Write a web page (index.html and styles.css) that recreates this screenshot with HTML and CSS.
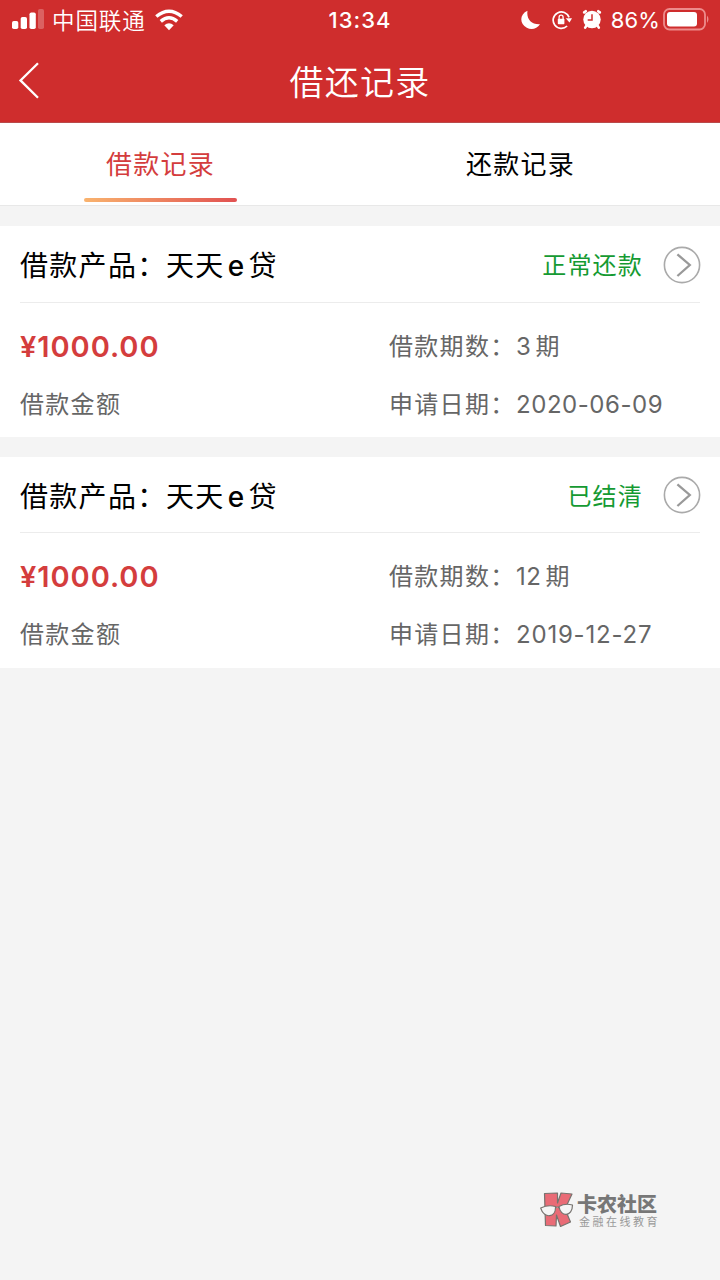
FILE: index.html
```html
<!DOCTYPE html>
<html lang="zh-CN">
<head>
<meta charset="utf-8">
<title>借还记录</title>
<link rel="stylesheet" href="styles.css">
</head>
<body>
<header class="header">
  <div class="status">
    <div class="status-left">
      <svg class="signal" width="32" height="20" viewBox="0 0 32 20" fill="#fff"><rect x="0" y="12" width="6.3" height="8" rx="1.8"/><rect x="8.7" y="8" width="6.3" height="12" rx="1.8"/><rect x="17.5" y="3.5" width="6.3" height="16.5" rx="1.8"/><rect x="26" y="0" width="6" height="20" rx="1.8" opacity=".25"/></svg>
      <span class="carrier">中国联通</span>
      <svg class="wifi" width="28" height="22" viewBox="0 0 28 22"><path d="M1.3 7.5Q14-3 26.7 7.5M5.8 12.3Q14 5.3 22.2 12.3" fill="none" stroke="#fff" stroke-width="3.5"/><path d="M9.3 16.3Q14 12.3 18.7 16.3L14 21.2Z" fill="#fff"/></svg>
    </div>
    <span class="clock">13:34</span>
    <div class="status-right">
      <svg width="20" height="20" viewBox="0 0 20 20"><path d="M6.5.8C5.2 8.6 10.3 14.8 19 14.2C16 19 10.4 20.3 5.8 17.8C-1.8 13.7-1.5 4.2 6.5.8Z" fill="#fff"/></svg>
      <svg class="lock" width="20" height="20" viewBox="0 0 20 20"><path d="M15.1 16A8.2 8.2 0 1 1 17.1 7.4" fill="none" stroke="#fff" stroke-width="1.7"/><path d="M13.7 8.2H20L17.5 12.5Z" fill="#fff"/><rect x="5.8" y="8.8" width="6.6" height="5.5" rx=".7" fill="#fff"/><path d="M7.1 9V7.2a2 2 0 0 1 4 0V9" fill="none" stroke="#fff" stroke-width="1.3"/></svg>
      <svg class="alarm" width="20" height="20" viewBox="0 0 20 20"><circle cx="10" cy="10.5" r="8.7" fill="#fff"/><path d="M2.2 3.4L3.8 2.2M17.8 3.4L16.2 2.2M4.2 17L3.2 18.6M15.8 17L16.8 18.6" stroke="#fff" stroke-width="2.6" stroke-linecap="round"/><path d="M10 5.2V11H5.7" fill="none" stroke="#cf2d2d" stroke-width="1.5"/></svg>
      <span class="percent">86%</span>
      <svg class="battery" width="47" height="23" viewBox="0 0 47 23"><rect x="1" y="1" width="41" height="20.5" rx="5.5" fill="none" stroke="#ed8c8c" stroke-width="1.8"/><rect x="4" y="4" width="30" height="14.5" rx="3" fill="#fff"/><path d="M44 7.5Q47 11.2 44 15Z" fill="#ed8c8c"/></svg>
    </div>
  </div>
  <div class="titlebar">
    <svg class="back" width="22" height="38" viewBox="0 0 22 38"><path d="M20 1.2L2.5 18.4L20 35.7" fill="none" stroke="#fff" stroke-width="2.3"/></svg>
    <h1 class="title">借还记录</h1>
  </div>
</header>
<nav class="tabs">
  <div class="tab tab-active">借款记录</div>
  <div class="tab">还款记录</div>
</nav>
<main class="list">
  <section class="card">
    <div class="card-head">
      <h2 class="product"><span class="product-label">借款产品：</span>天天<span class="latin">e</span>贷</h2>
      <span class="state">正常还款</span>
      <svg class="arrow" width="38" height="38" viewBox="0 0 38 38" fill="none"><circle cx="19" cy="19" r="17.6" stroke="#aaa" stroke-width="1.6"/><path d="M14.4 8.3L26.8 19L14.4 30" stroke="#999" stroke-width="2.3"/></svg>
    </div>
    <div class="card-body">
      <div class="amount">¥1000.00</div>
      <div class="field"><span class="label">借款期数：</span><span class="num">3</span><span class="unit">期</span></div>
      <div class="caption">借款金额</div>
      <div class="field"><span class="label">申请日期：</span><span class="num">2020-06-09</span></div>
    </div>
  </section>
  <section class="card card-settled">
    <div class="card-head">
      <h2 class="product"><span class="product-label">借款产品：</span>天天<span class="latin">e</span>贷</h2>
      <span class="state">已结清</span>
      <svg class="arrow" width="38" height="38" viewBox="0 0 38 38" fill="none"><circle cx="19" cy="19" r="17.6" stroke="#aaa" stroke-width="1.6"/><path d="M14.4 8.3L26.8 19L14.4 30" stroke="#999" stroke-width="2.3"/></svg>
    </div>
    <div class="card-body">
      <div class="amount">¥1000.00</div>
      <div class="field"><span class="label">借款期数：</span><span class="num">12</span><span class="unit">期</span></div>
      <div class="caption">借款金额</div>
      <div class="field"><span class="label">申请日期：</span><span class="num num-settled">2019-12-27</span></div>
    </div>
  </section>
</main>
<footer class="brand">
  <svg width="34" height="36" viewBox="0 0 34 36" stroke="#77736f" stroke-linejoin="round"><path d="M4.5 1.5L17.5 1L17.5 11L21 1L32 2L25 17L30.5 30L20.5 34.5L16.5 23L16 34L5.5 33.5Z" fill="#e96b76" stroke-width="1.2"/><path d="M0.7 16Q8 12.5 15.5 14.5C16 26 4 27 .7 16ZM19 14.5Q25 11 32.5 13C32.5 25 20.5 25.5 19 14.5ZM15.5 16Q17 14 19 16" fill="#f5f5f5" stroke-width="1.2"/></svg>
  <div class="brand-text"><div class="brand-name">卡农社区</div><div class="brand-sub">金融在线教育</div></div>
</footer>
</body>
</html>
```
FILE: styles.css
```css
* { box-sizing: border-box; }
body {
  margin: 0;
  width: 720px;
  height: 1280px;
  display: flex;
  flex-direction: column;
  background: #f4f4f4;
  color: #000;
  font-family: Inter, "Noto Sans CJK SC", sans-serif;
  overflow: hidden;
}
svg { display: block; flex: none; }
.header { height: 123px; background: #cf2d2d; color: #fff; flex: none; border-bottom: 1px solid #b94a4a; }
.status { height: 40px; display: grid; grid-template-columns: 1fr auto 1fr; align-items: center; padding: 0 10px 0 12px; }
.status-left, .status-right { display: flex; align-items: center; }
.status-right { justify-content: flex-end; }
.signal { margin-top: -2px; }
.carrier { font-family: "Noto Sans CJK SC", sans-serif; font-size: 22.5px; letter-spacing: .9px; margin-left: 8px; line-height: 38px; margin-top: -2px; font-weight: 350; }
.wifi { margin-left: 9px; margin-top: -1px; }
.clock { font-size: 22px; font-weight: 500; letter-spacing: 1px; margin-left: -2px; }
.lock { margin-left: 11px; }
.alarm { margin-left: 10px; margin-top: -3px; }
.percent { font-size: 22px; margin-left: 9px; letter-spacing: .1px; }
.battery { margin-left: 3px; margin-top: -2px; }
.titlebar { height: 82px; display: grid; grid-template-columns: 40px 1fr 40px; align-items: center; padding: 0 18px; }
.title { margin: 0; padding-top: 3px; text-align: center; font-size: 34px; line-height: 50px; font-weight: 350; letter-spacing: 1.2px; }
.tabs { display: grid; grid-template-columns: 1fr 1fr; height: 83px; background: #fff; border-bottom: 1px solid #e8e8e8; flex: none; }
.tab { display: flex; flex-direction: column; align-items: center; font-size: 26px; letter-spacing: 1.2px; line-height: 40px; padding: 22px 39px 0 0; }
.tab-active { color: #d43d3d; }
.tab-active::after { content: ""; width: 153px; height: 4px; margin-top: 13px; border-radius: 2px; background: linear-gradient(90deg, #f9b36e, #e15151); }
.list { display: flex; flex-direction: column; gap: 20px; padding-top: 20px; }
.card { height: 211px; background: #fff; padding: 0 20px; }
.card-head { height: 77px; display: flex; align-items: center; border-bottom: 1px solid #ececec; }
.card-settled .card-head { height: 76px; }
.product { margin: 0; padding-top: 4px; flex: 1; display: flex; font-size: 28px; line-height: 40px; font-weight: 400; letter-spacing: 1.3px; }
.product-label { width: 146px; white-space: nowrap; }
.latin { width: 24px; text-align: center; font-weight: 450; }
.state { color: #159a32; font-size: 24px; letter-spacing: 1.2px; line-height: 36px; padding-top: 4px; }
.arrow { margin-left: 20px; margin-right: -1px; margin-top: 2px; }
.card-settled .arrow { margin-top: 0; }
.card-body { display: grid; grid-template-columns: 369px 1fr; grid-template-rows: 58px 58px; align-items: center; padding-top: 14px; }
.amount { color: #d43d3d; font-size: 29px; font-weight: 600; letter-spacing: .95px; line-height: 40px; padding-top: 1px; }
.field, .caption { color: #666; font-size: 24px; line-height: 36px; letter-spacing: 1.3px; padding-top: 2px; }
.field { display: flex; white-space: nowrap; }
.label { width: 127px; }
.num { letter-spacing: .55px; }
.num-settled { letter-spacing: .8px; }
.unit { margin-left: 4px; }
.brand { margin-top: auto; display: flex; align-items: center; padding: 0 0 52px 540px; color: #777; }
.brand-text { margin-left: 3px; padding-top: 2px; }
.brand-name { font-size: 20px; line-height: 21px; font-weight: 900; white-space: nowrap; }
.brand-sub { font-size: 11px; line-height: 12px; letter-spacing: 2.5px; color: #999; margin-left: 2px; white-space: nowrap; }
```
